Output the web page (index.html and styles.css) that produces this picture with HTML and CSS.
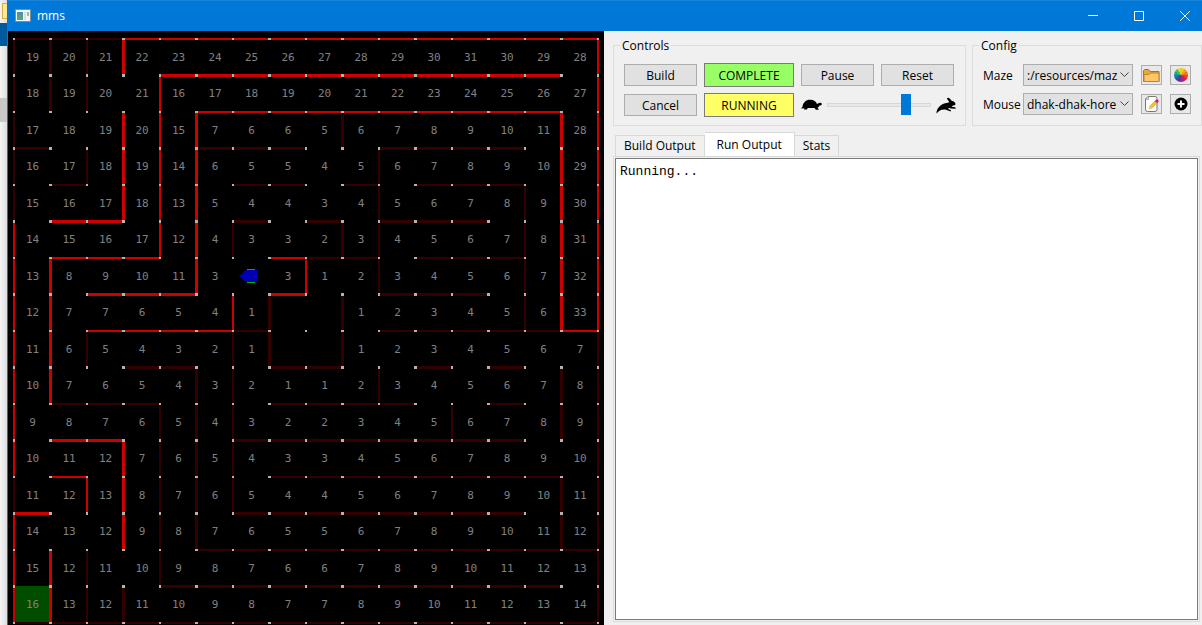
FILE: index.html
```html
<!DOCTYPE html>
<html lang="en">
<head>
<meta charset="utf-8">
<title>mms</title>
<link rel="stylesheet" href="styles.css">
</head>
<body>
<div class="desktop">
  <div class="backdrop" aria-hidden="true">
    <span class="backdrop-folder"></span>
    <span class="backdrop-accent"></span>
    <span class="backdrop-selection"></span>
  </div>
  <div class="window">
    <header class="titlebar">
      <svg class="app-icon" width="16" height="14" viewBox="0 0 16 14" aria-hidden="true">
        <rect x="0.5" y="0.5" width="15" height="12" fill="#f4f4f4" stroke="#7f8b95"/>
        <rect x="2" y="3" width="6" height="8" fill="#4f8fae"/>
        <path d="M2 11V7l3-2 3 6z" fill="#57a773"/>
        <rect x="9" y="3" width="2" height="8" fill="#dcdcdc"/>
        <rect x="12" y="3" width="2" height="4" fill="#8fc0a0"/>
      </svg>
      <h1 class="title">mms</h1>
      <div class="window-buttons">
        <button class="window-button" type="button" aria-label="Minimize"><svg width="10" height="10" viewBox="0 0 10 10"><path d="M0 4.500h10"/></svg></button>
        <button class="window-button" type="button" aria-label="Maximize"><svg width="10" height="10" viewBox="0 0 10 10"><path d="M.5.5h9v9h-9z"/></svg></button>
        <button class="window-button" type="button" aria-label="Close"><svg width="10" height="10" viewBox="0 0 10 10"><path d="M0 0l10 10M10 0L0 10"/></svg></button>
      </div>
    </header>
    <main class="content">
      <section class="maze-pane" aria-label="Maze">
        <svg id="maze" class="maze" viewBox="0 0 596 594" preserveAspectRatio="xMinYMin meet"></svg>
      </section>
      <section class="panel">
        <div class="groups">
          <fieldset class="group">
            <legend>Controls</legend>
            <div class="controls">
              <button class="button" type="button">Build</button>
              <output class="status status-complete">COMPLETE</output>
              <button class="button" type="button">Pause</button>
              <button class="button" type="button">Reset</button>
              <button class="button" type="button">Cancel</button>
              <output class="status status-running">RUNNING</output>
              <div class="speed">
                <svg width="21" height="14" viewBox="0 0 21 14" aria-hidden="true"><path d="M0 10.5 1.500 8.800C2 4.500 5 1.800 9 1.800c4 0 6 2 7 4.200l1.500-.7c.8-1 3.300-.6 3.300.7 0 1.200-1.200 1.600-2.300 1.600-.4 1.100-1 1.700-2 2l1.400 2.200h-3L13.500 10H6.800l-.9 1.500H3l.2-1.300z"/></svg>
                <input class="slider" type="range" min="0" max="100" value="79" aria-label="Speed">
                <svg width="20" height="17" viewBox="0 0 20 17" aria-hidden="true"><path d="M.5 16.500c0-2.500.8-4.700 2.300-6.200C4.500 8 7 6.300 10.500 5.900l3-.6C12.600 4 11.200 2.500 11 1.200c.7-1.100 2-.4 2.700.4L15.900 4c2 .1 3.400 1.500 3.700 3.300-.5.9-1.600 1.200-2.700 1.200l-1.300 1.200 3.600.6.6 1.500-5-.3-1.500-.6-1.500.8 3.200 1.500-.3 1.300-5.500-2-3.800.3-2.600 1.500z"/></svg>
              </div>
            </div>
          </fieldset>
          <fieldset class="group group-config">
            <legend>Config</legend>
            <div class="config">
              <label for="maze-file">Maze</label>
              <div class="combo">
                <select id="maze-file"><option>:/resources/maz</option></select>
                <svg width="9" height="6" viewBox="0 0 9 6" aria-hidden="true"><path d="M.5.5l4 4 4-4"/></svg>
              </div>
              <button class="tool" type="button" aria-label="Open maze file">
                <svg width="17" height="15" viewBox="0 0 17 15"><path d="M.5 13.500v-11l1-1h4l1.500 2h9v10z" fill="#e9a63a" stroke="#a8741f"/><path d="M1 13.500V6.500h5l1.500-1.500h8.500v8.500z" fill="#fdc766" stroke="#b98533"/></svg>
              </button>
              <button class="tool" type="button" aria-label="Colors"><span class="wheel"></span></button>
              <label for="mouse-name">Mouse</label>
              <div class="combo">
                <select id="mouse-name"><option>dhak-dhak-hore</option></select>
                <svg width="9" height="6" viewBox="0 0 9 6" aria-hidden="true"><path d="M.5.5l4 4 4-4"/></svg>
              </div>
              <button class="tool" type="button" aria-label="Edit mouse">
                <svg width="15" height="16" viewBox="0 0 15 16"><path d="M1.500 3v10.500q0 2 2 2h7.500q2 0 2-2V2.500q0-2-2-2H4z" fill="#fff" stroke="#777"/><path d="M1.500 3.500 4.500.5v3z" fill="#ddd" stroke="#888" stroke-width=".6"/><path d="M5 13l.8-3 5-5 2.200 2-5 5z" fill="#f4c524" stroke="#b58a10" stroke-width=".4"/><path d="M5 13l.8-3 2.200 2z" fill="#e9c79a"/><path d="M10.800 5l1.300-1.300q1.400-.6 2.200.6t0 1.600L13 7z" fill="#d4147c"/></svg>
              </button>
              <button class="tool" type="button" aria-label="Add mouse">
                <svg width="14" height="14" viewBox="0 0 14 14"><circle cx="7" cy="7" r="6.500"/><path d="M7 3.500v7M3.500 7h7" stroke="#fff" stroke-width="2"/></svg>
              </button>
            </div>
          </fieldset>
        </div>
        <div class="tabs" role="tablist">
          <button class="tab" type="button" role="tab" aria-selected="false">Build Output</button>
          <button class="tab tab-selected" type="button" role="tab" aria-selected="true">Run Output</button>
          <button class="tab" type="button" role="tab" aria-selected="false">Stats</button>
        </div>
        <div class="tab-body" role="tabpanel">
          <textarea class="output" readonly aria-label="Run output">Running...</textarea>
        </div>
      </section>
    </main>
  </div>
</div>
<script src="maze.js"></script>
</body>
</html>
```

FILE: styles.css
```css
* {
  box-sizing: border-box;
}

body {
  margin: 0;
  background: #f0f0f0;
  color: #000;
  font: 12px/16px "Open Sans", "Noto Sans", sans-serif;
}

button,
select,
output {
  font: inherit;
  color: inherit;
}

.desktop {
  display: flex;
  min-height: 100vh;
}

/* Sliver of the window behind this one */
.backdrop {
  display: flex;
  flex-direction: column;
  flex: 0 0 7px;
  padding-top: 3px;
  background: linear-gradient(to right, #f4f4f4, #dedede);
}

.backdrop-folder {
  height: 16px;
  margin-left: 2px;
  border: 1px solid #d9b13b;
  border-right: 0;
  background: #fbe694;
}

.backdrop-accent {
  height: 23px;
  margin-top: 4px;
  background: #005a9e;
}

.backdrop-selection {
  height: 24px;
  margin-top: 52px;
  background: #c8c8c8;
}

.window {
  display: flex;
  flex: 1;
  flex-direction: column;
  min-width: 0;
  overflow: hidden;
  border-left: 1px solid #0078d7;
  background: #f0f0f0;
}

.titlebar {
  display: flex;
  align-items: center;
  height: 31px;
  padding-left: 7px;
  border-top: 1px solid #1883d7;
  background: #0078d7;
  color: #fff;
}

.title {
  flex: 1;
  margin: 0 0 0 6px;
  font-size: 12px;
  font-weight: 400;
}

.window-buttons {
  display: flex;
  margin-right: -6px;
}

.window-button {
  display: flex;
  align-items: center;
  justify-content: center;
  width: 46px;
  height: 28px;
  padding: 0;
  border: 0;
  background: transparent;
}

.window-button path {
  fill: none;
  stroke: #fff;
}

.content {
  display: grid;
  flex: 1;
  grid-template-columns: minmax(0, 1fr) 598px;
}

.maze-pane {
  background: #000;
}

.maze {
  display: block;
  width: 100%;
}

.maze rect {
  shape-rendering: crispEdges;
}

.wall-known {
  fill: #cc0000;
}

.wall-unknown {
  fill: #330000;
}

.post {
  fill: #b3b3b3;
}

.start {
  fill: #004d00;
}

.mouse-body {
  fill: #0000b3;
}

.mouse-wheel {
  fill: #00b300;
}

.distance {
  fill: #808080;
  font: 11px "DejaVu Sans Mono", monospace;
  text-anchor: middle;
}

.panel {
  display: flex;
  flex-direction: column;
  padding: 6px 0 3px 9px;
}

.groups {
  display: grid;
  grid-template-columns: 353px minmax(0, 1fr);
  gap: 6px;
}

.group {
  min-width: 0;
  margin: 0;
  padding: 10px 10px 8px;
  border: 1px solid #dcdcdc;
}

.group legend {
  margin-left: -4px;
  padding: 2px 2px 0;
  line-height: 14px;
}

.controls {
  display: grid;
  grid-template-columns: 73px 90px 73px 73px;
  grid-auto-rows: 24px;
  align-items: center;
  gap: 6px 7px;
}

.button {
  height: 22px;
  padding: 2px 0 0;
  border: 1px solid #adadad;
  background: #e1e1e1;
}

.status {
  height: 24px;
  border: 1px solid #7a7a7a;
  line-height: 24px;
  text-align: center;
}

.status-complete {
  background: #99ff66;
}

.status-running {
  background: #ffff66;
}

.speed {
  display: flex;
  grid-column: span 2;
  align-items: center;
  gap: 5px;
  margin-right: -2px;
}

.slider {
  flex: 1;
  min-width: 0;
  height: 21px;
  margin: 0;
  appearance: none;
  background: transparent;
}

.slider::-webkit-slider-runnable-track {
  height: 4px;
  border: 1px solid #d6d6d6;
  background: #e7eaea;
}

.slider::-webkit-slider-thumb {
  width: 10px;
  height: 21px;
  margin-top: -10px;
  appearance: none;
  background: #0078d7;
}

.group-config {
  padding-top: 11px;
}

.config {
  display: grid;
  grid-template-columns: minmax(0, 1fr) 110px 21px 21px;
  grid-auto-rows: 22px;
  align-items: center;
  gap: 7px 8px;
}

.config label {
  padding-top: 2px;
  white-space: nowrap;
}

.combo {
  display: grid;
  align-items: center;
}

.combo select {
  grid-area: 1 / 1;
  width: 100%;
  height: 22px;
  padding: 2px 14px 0 3px;
  appearance: none;
  border: 1px solid #adadad;
  border-radius: 0;
  background: #e1e1e1;
}

.combo svg {
  grid-area: 1 / 1;
  justify-self: end;
  margin-right: 4px;
  pointer-events: none;
}

.combo path {
  fill: none;
  stroke: #444;
}

.tool {
  display: flex;
  align-items: center;
  justify-content: center;
  height: 20px;
  padding: 0;
  border: 1px solid #adadad;
  background: #e8e8e8;
}

.tool svg {
  flex: none;
}

.wheel {
  width: 14px;
  height: 14px;
  border-radius: 50%;
  background: conic-gradient(#fdc70c 0 30deg, #f99d1c 0 60deg, #f37022 0 90deg, #ee3e2c 0 120deg, #d9203f 0 150deg, #a3238e 0 180deg, #6a3093 0 210deg, #3b4ba0 0 240deg, #1b75bc 0 270deg, #1aa59a 0 300deg, #5cb947 0 330deg, #d5df26 0);
}

.tabs {
  display: flex;
  align-items: flex-end;
  height: 24px;
  margin-top: 6px;
  padding-left: 2px;
}

.tab {
  height: 21px;
  padding: 0 8px;
  border: 1px solid #d9d9d9;
  border-bottom: 0;
  background: #f0f0f0;
}

.tab + .tab {
  border-left: 0;
}

.tab-selected {
  height: 24px;
  padding: 0 12px;
  background: #fff;
}

.tab-body {
  display: flex;
  flex: 1;
  margin-right: 2px;
  padding: 1px;
  border: 1px solid #dcdcdc;
  border-top-color: #d9d9d9;
}

.output {
  flex: 1;
  min-width: 0;
  margin: 0;
  padding: 5px 4px;
  border: 1px solid #7a7a7a;
  outline: 0;
  resize: none;
  background: #fff;
  color: #000;
  font: 13px/16px "Liberation Mono", monospace;
}
```

FILE: maze.js
```js
const PITCH = 36.5;
const LEFT = 5;
const TOP = 7;

// R: wall the mouse has found, d: wall not seen yet, dot: open
const horizontal = [
  "dddRRRRRRRRRRRRR",
  "....RRRRRRRRRRR.",
  ".....RRRRRRRRRR.",
  "d....ddd..dddd..",
  ".d....dd.d.ddd..",
  ".RR...d.d.ddd...",
  ".RRR...Rdd.ddd..",
  "..RRR..R..ddd...",
  "..RRRRd...dddddR",
  "...dd..dd..d.d..",
  ".ddd...dddd..d..",
  ".RR...dddddddd..",
  ".R.....dddddddd.",
  "R.....dddddddd..",
  ".....ddddddddddd",
  "....ddddddddddd.",
  "dddddddddddddddd"
];

const vertical = [
  "dddR............R",
  "ddd.R...........R",
  "d..RRR...d.....RR",
  "d.dRRR....d....RR",
  "d..RRR....d...dRR",
  "R...RRd..dd...dRR",
  "RR...R..R.d...dRR",
  "RR....Rd.d....dRR",
  "RRd...dd.d......d",
  "RR...dd...d....dd",
  "R...ddd.....d..dd",
  "R..Rddd.........d",
  "d.RRddd........dd",
  "R..Rdd.........dd",
  "RRd.d...........d",
  "RRdd............d"
];

// Distance of every cell from the centre; null where no number is shown
const distances = [
  [19, 20, 21, 22, 23, 24, 25, 26, 27, 28, 29, 30, 31, 30, 29, 28],
  [18, 19, 20, 21, 16, 17, 18, 19, 20, 21, 22, 23, 24, 25, 26, 27],
  [17, 18, 19, 20, 15, 7, 6, 6, 5, 6, 7, 8, 9, 10, 11, 28],
  [16, 17, 18, 19, 14, 6, 5, 5, 4, 5, 6, 7, 8, 9, 10, 29],
  [15, 16, 17, 18, 13, 5, 4, 4, 3, 4, 5, 6, 7, 8, 9, 30],
  [14, 15, 16, 17, 12, 4, 3, 3, 2, 3, 4, 5, 6, 7, 8, 31],
  [13, 8, 9, 10, 11, 3, null, 3, 1, 2, 3, 4, 5, 6, 7, 32],
  [12, 7, 7, 6, 5, 4, 1, null, null, 1, 2, 3, 4, 5, 6, 33],
  [11, 6, 5, 4, 3, 2, 1, null, null, 1, 2, 3, 4, 5, 6, 7],
  [10, 7, 6, 5, 4, 3, 2, 1, 1, 2, 3, 4, 5, 6, 7, 8],
  [9, 8, 7, 6, 5, 4, 3, 2, 2, 3, 4, 5, 6, 7, 8, 9],
  [10, 11, 12, 7, 6, 5, 4, 3, 3, 4, 5, 6, 7, 8, 9, 10],
  [11, 12, 13, 8, 7, 6, 5, 4, 4, 5, 6, 7, 8, 9, 10, 11],
  [14, 13, 12, 9, 8, 7, 6, 5, 5, 6, 7, 8, 9, 10, 11, 12],
  [15, 12, 11, 10, 9, 8, 7, 6, 6, 7, 8, 9, 10, 11, 12, 13],
  [16, 13, 12, 11, 10, 9, 8, 7, 7, 8, 9, 10, 11, 12, 13, 14]
];

const svg = document.getElementById("maze");

function add(name, attributes, text) {
  const node = document.createElementNS("http://www.w3.org/2000/svg", name);
  for (const key in attributes) node.setAttribute(key, attributes[key]);
  if (text !== undefined) node.textContent = text;
  svg.appendChild(node);
}

function box(cls, x, y, width, height) {
  add("rect", { class: cls, x, y, width, height });
}

const gridX = i => LEFT + Math.floor(PITCH * i);
const gridY = j => TOP + Math.floor(PITCH * j);
const thickness = n => 2 + n % 2;
const wallClass = c => c === "R" ? "wall-known" : "wall-unknown";

box("start", gridX(0) + 2, gridY(15) + 1, 35, 36);

horizontal.forEach((row, j) => [...row].forEach((c, i) => {
  if (c !== ".") box(wallClass(c), gridX(i), gridY(j), gridX(i + 1) - gridX(i), thickness(j));
}));

vertical.forEach((row, j) => [...row].forEach((c, i) => {
  if (c !== ".") box(wallClass(c), gridX(i), gridY(j), thickness(i), gridY(j + 1) - gridY(j));
}));

for (let j = 0; j <= 16; j++) {
  for (let i = 0; i <= 16; i++) box("post", gridX(i), gridY(j), thickness(i), thickness(j));
}

distances.forEach((row, j) => row.forEach((value, i) => {
  if (value !== null) add("text", { class: "distance", x: 24.5 + PITCH * i, y: Math.floor(30 + PITCH * j) }, value);
}));

add("polygon", { class: "mouse-body", points: "231,245.500 238,239 249.500,239 249.500,251 238,251" });
box("mouse-wheel", 239, 238, 8, 1);
box("mouse-wheel", 239, 251, 8, 1);
```
